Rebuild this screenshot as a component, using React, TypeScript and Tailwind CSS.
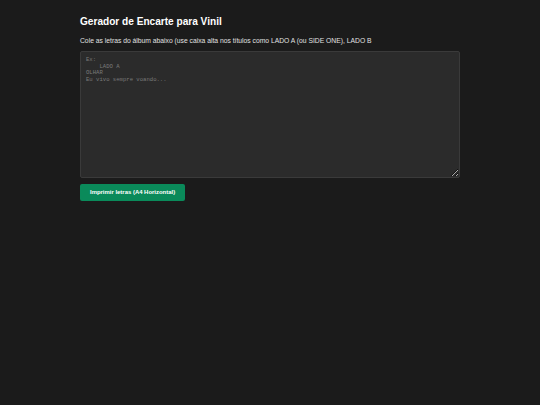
import React, { useState } from 'react';

const PLACEHOLDER = 'Ex:\n    LADO A\nOLHAR\nEu vivo sempre voando...';

export default function App() {
  const [lyrics, setLyrics] = useState('');

  return (
    <div className="min-h-screen w-full bg-[#1b1b1b] text-[#e6e6e6] font-['Liberation_Sans',Arial,sans-serif]">
      <div className="w-[380px] ml-[80px] pt-[16px] flex flex-col">
        {/* Header */}
        <h1 className="text-[10.1px] leading-[12px] font-bold text-white">Gerador de Encarte para Vinil</h1>
        <p className="mt-[9px] text-[6.75px] leading-[8px] text-[#e0e0e0]">
          Cole as letras do álbum abaixo (use caixa alta nos títulos como LADO A (ou SIDE ONE), LADO B
        </p>

        {/* Lyrics input */}
        <textarea
          value={lyrics}
          onChange={e => setLyrics(e.target.value)}
          placeholder={PLACEHOLDER}
          className="mt-[6px] h-[127px] w-full resize-y rounded-[2px] border border-[#3a3a3a] bg-[#2b2b2b] px-[5px] py-[5px] font-['Liberation_Mono','DejaVu_Sans_Mono',monospace] text-[5.6px] leading-[6.7px] text-[#cccccc] placeholder:text-[#7a7a7a] outline-none"
        />

        <div className="mt-[6px] flex">
          <button className="h-[17px] px-[10px] rounded-[2px] bg-[#0a8a5a] text-white text-[5.95px] font-bold">
            Imprimir letras (A4 Horizontal)
          </button>
        </div>
      </div>
    </div>
  );
}
